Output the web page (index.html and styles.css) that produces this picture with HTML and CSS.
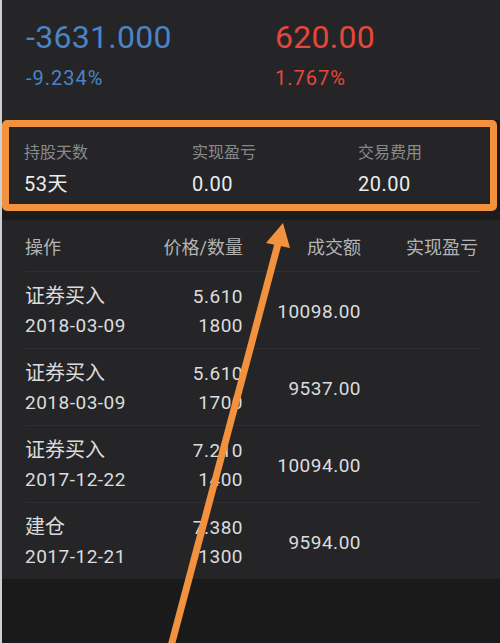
FILE: index.html
```html
<!DOCTYPE html>
<html lang="zh-CN">
<head>
<meta charset="utf-8">
<title>持仓详情</title>
<link rel="stylesheet" href="styles.css">
</head>
<body>
<div class="page">
  <section class="summary">
    <div class="sum-col">
      <div class="big blue">-3631.000</div>
      <div class="pct blue">-9.234%</div>
    </div>
    <div class="sum-col">
      <div class="big red">620.00</div>
      <div class="pct red">1.767%</div>
    </div>
  </section>

  <section class="stats">
    <div class="stat">
      <div class="stat-label">持股天数</div>
      <div class="stat-value">53天</div>
    </div>
    <div class="stat">
      <div class="stat-label">实现盈亏</div>
      <div class="stat-value">0.00</div>
    </div>
    <div class="stat">
      <div class="stat-label">交易费用</div>
      <div class="stat-value">20.00</div>
    </div>
  </section>

  <div class="divider"></div>

  <section class="trades">
    <div class="trade-head">
      <div class="c1">操作</div>
      <div class="c2">价格/数量</div>
      <div class="c3">成交额</div>
      <div class="c4">实现盈亏</div>
    </div>
    <div class="trade-row">
      <div class="c1"><div class="ln">证券买入</div><div class="ln num">2018-03-09</div></div>
      <div class="c2"><div class="ln num">5.610</div><div class="ln num">1800</div></div>
      <div class="c3 num">10098.00</div>
      <div class="c4"></div>
    </div>
    <div class="trade-row">
      <div class="c1"><div class="ln">证券买入</div><div class="ln num">2018-03-09</div></div>
      <div class="c2"><div class="ln num">5.610</div><div class="ln num">1700</div></div>
      <div class="c3 num">9537.00</div>
      <div class="c4"></div>
    </div>
    <div class="trade-row">
      <div class="c1"><div class="ln">证券买入</div><div class="ln num">2017-12-22</div></div>
      <div class="c2"><div class="ln num">7.210</div><div class="ln num">1400</div></div>
      <div class="c3 num">10094.00</div>
      <div class="c4"></div>
    </div>
    <div class="trade-row last">
      <div class="c1"><div class="ln">建仓</div><div class="ln num">2017-12-21</div></div>
      <div class="c2"><div class="ln num">7.380</div><div class="ln num">1300</div></div>
      <div class="c3 num">9594.00</div>
      <div class="c4"></div>
    </div>
  </section>

  <div class="rest"></div>

  <svg class="arrow" width="500" height="643" viewBox="0 0 500 643">
    <line x1="170" y1="650" x2="279" y2="240" stroke="#f2923f" stroke-width="7"/>
    <polygon points="283,223 266,243 290,248" fill="#f2923f"/>
  </svg>
</div>
</body>
</html>
```

FILE: styles.css
```css
* { box-sizing: border-box; }

html, body {
  margin: 0;
  padding: 0;
  background: #1a1a1b;
}

body {
  font-family: "Roboto", "Noto Sans CJK SC", sans-serif;
  color: #dcdcdc;
}

.page {
  position: relative;
  width: 500px;
  height: 643px;
  overflow: hidden;
  border-left: 2px solid #cfcfcf;
  background: #1a1a1b;
}

/* summary */
.summary {
  display: grid;
  grid-template-columns: 249px 1fr;
  height: 120px;
  padding-left: 24px;
  background: #252527;
}

.sum-col {
  display: flex;
  flex-direction: column;
}

.big {
  margin-top: 20px;
  height: 34px;
  line-height: 34px;
  font-size: 32px;
  letter-spacing: 0.3px;
}

.pct {
  margin-top: 13px;
  height: 22px;
  line-height: 22px;
  font-size: 20px;
  letter-spacing: 1px;
}

.blue { color: #4a84c6; }
.red { color: #e6473b; }

/* stats box */
.stats {
  display: grid;
  grid-template-columns: 168px 166px 1fr;
  height: 91px;
  margin-right: 3px;
  padding-left: 15px;
  border: 7px solid #f2923f;
  border-radius: 5px;
  background: #252527;
}

.stat-label {
  margin-top: 16px;
  height: 20px;
  line-height: 20px;
  font-size: 16px;
  color: #8a8a8c;
}

.stat-value {
  margin-top: 9px;
  height: 24px;
  line-height: 24px;
  font-size: 20px;
  color: #ececec;
  letter-spacing: 0.5px;
}

.divider {
  height: 9px;
  background: #1c1c1d;
}

/* trades */
.trades {
  background: #252527;
  padding: 0 20px 0 23px;
}

.trade-head,
.trade-row {
  display: grid;
  grid-template-columns: 115px 103px 118px 117px;
  border-bottom: 1px solid #303032;
}

.trade-head {
  height: 52px;
  align-items: center;
  font-size: 18px;
  color: #b4b4b6;
}

.trade-row {
  height: 77px;
  padding: 10px 0 8px;
  font-size: 19px;
  color: #dcdcde;
}

.trade-row.last {
  border-bottom: none;
  height: 76px;
}

.c2, .c3, .c4 { text-align: right; }

.trade-row .c3 { align-self: center; }

.ln {
  height: 29px;
  line-height: 29px;
}

.c1 .ln:first-child {
  font-size: 20px;
}

.num { letter-spacing: 0.5px; }

.rest {
  background: #1a1a1b;
}

/* annotation overlay */
.arrow {
  position: absolute;
  left: -2px;
  top: 0;
  pointer-events: none;
}
```
